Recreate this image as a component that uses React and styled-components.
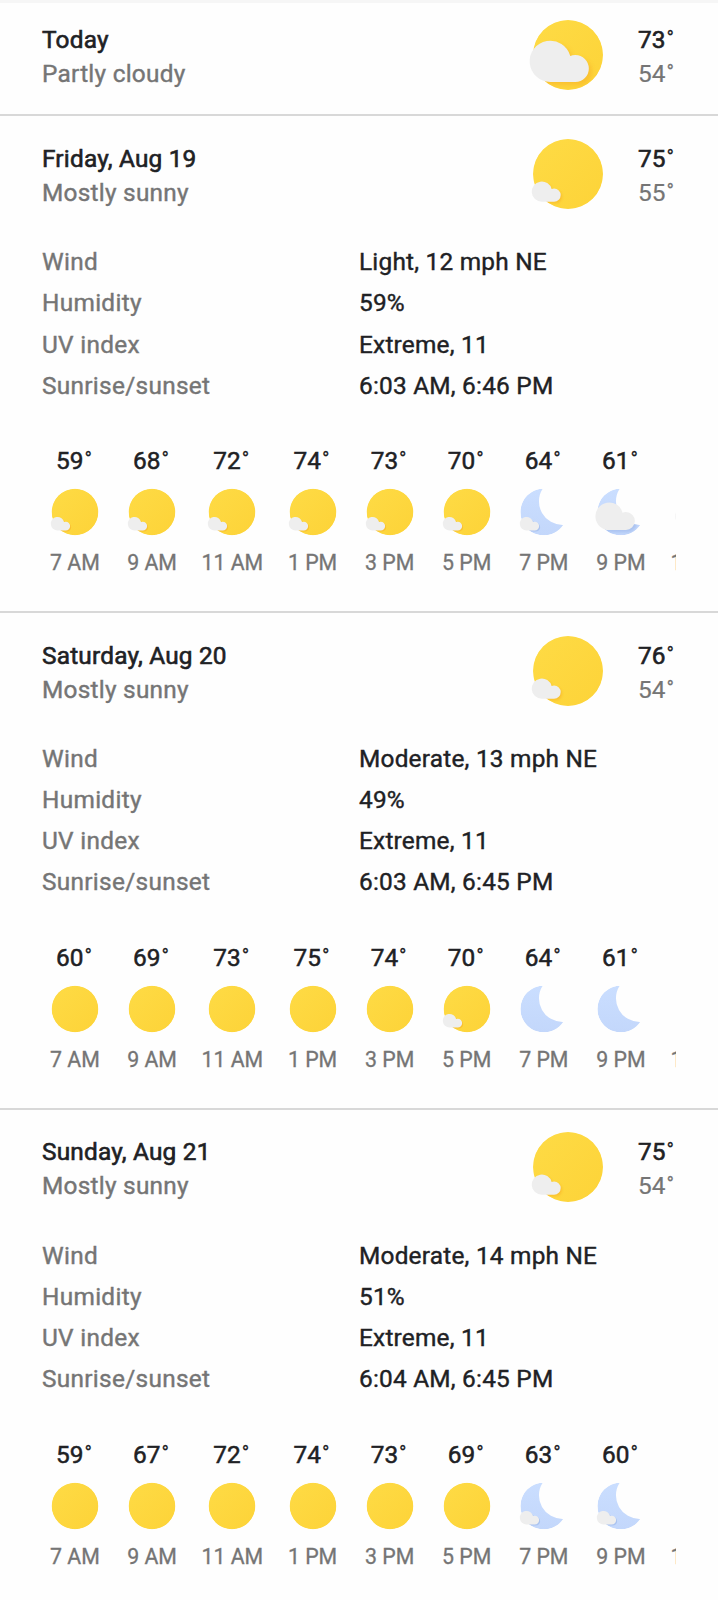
import React from "react";
import styled, { createGlobalStyle } from "styled-components";

const GlobalStyle = createGlobalStyle`
  * { box-sizing: border-box; }
  body { margin: 0; background: #fefefe; overflow: hidden; }
`;

const Page = styled.main`
  width: 718px;
  height: 1600px;
  overflow: hidden;
  background: #fefefe;
  border-top: 3px solid #f6f6f6;
  font-family: Roboto, "Liberation Sans", sans-serif;
  font-weight: 400;
  font-size: 24.4px;
  line-height: 34px;
  color: #202124;
  -webkit-text-stroke: 0.4px;
`;

const Day = styled.section`
  height: ${(p) => (p.$open ? 496.8 : 113.2)}px;
  border-bottom: 2px solid #d8d8d8;
  padding: ${(p) => (p.$open ? 25.6 : 19.6)}px 42px 0;
`;

const Header = styled.header`
  display: flex;
  height: 68px;
`;

const Title = styled.div`
  flex: 1;
`;

const DayName = styled.div`
  letter-spacing: 0.2px;
  -webkit-text-stroke-width: 0.6px;
`;

const Muted = styled.div`
  color: #757575;
  letter-spacing: 0.25px;
`;

const HeaderIcon = styled.div`
  width: 84px;
  height: 72px;
  margin: -4px 28px 0 0;
`;

const HighLow = styled.div`
  width: 38px;
  white-space: nowrap;
`;

const High = styled.div`
  -webkit-text-stroke-width: 0.6px;
`;

const Low = styled.div`
  color: #757575;
  -webkit-text-stroke-width: 0.2px;
`;

const Degree = styled.span`
  display: inline-block;
  line-height: 1;
  font-size: 20px;
  margin-left: 1px;
  transform: translateY(-3.2px);
  -webkit-text-stroke-width: 0.2px;
`;

const Details = styled.dl`
  display: grid;
  grid-template-columns: 317px 1fr;
  grid-auto-rows: 41.1px;
  align-items: center;
  margin: 32px 0 0;
`;

const Label = styled.dt`
  color: #757575;
  letter-spacing: 0.3px;
`;

const Value = styled.dd`
  margin: 0;
  letter-spacing: 0.22px;
`;

const Hours = styled.div`
  display: flex;
  overflow: hidden;
  width: 640px;
  margin: 37.8px 0 0 -5.6px;
`;

const Hour = styled.div`
  flex: none;
  width: ${(p) => (p.$wide ? 83.4 : 77.1)}px;
  display: flex;
  flex-direction: column;
  align-items: center;
`;

const HourTemp = styled.div`
  height: 34px;
  padding-right: 2px;
  -webkit-text-stroke-width: 0.5px;
`;

const HourIcon = styled.div`
  width: 56px;
  height: 48px;
  margin: 10px 0 10px;
`;

const HourTime = styled.div`
  font-size: 21.3px;
  color: #757575;
  white-space: nowrap;
  -webkit-text-stroke-width: 0.3px;
`;

const Svg = styled.svg`
  display: block;
  width: 100%;
  height: 100%;
`;

const CLOUD =
  "M-53 81A62 62 0 1 1 6.9 3.1Q13 0 22 0A40.5 40.5 0 0 1 22 81Z";

function WeatherIcon({ kind }) {
  const night = kind.startsWith("moon");
  const cloud = kind.endsWith("partly")
    ? undefined
    : "translate(-52.5 43.5) scale(.49)";
  const hasCloud = kind.endsWith("partly") || kind.endsWith("mostly");
  return (
    <Svg viewBox="-126 -108 252 216">
      <defs>
        <linearGradient id="sunFill" x1="0" y1="0" x2="1" y2="1">
          <stop offset="0" stopColor="#fedb45" />
          <stop offset="1" stopColor="#fdd338" />
        </linearGradient>
        <linearGradient id="moonFill" x1="0" y1="0" x2="0" y2="1">
          <stop offset="0" stopColor="#cadeff" />
          <stop offset="1" stopColor="#c3d7fb" />
        </linearGradient>
        <filter id="soft" x="-30%" y="-30%" width="160%" height="160%">
          <feGaussianBlur stdDeviation="7" />
        </filter>
        <clipPath id="sunClip">
          <circle r="105" />
        </clipPath>
        <clipPath id="moonClip">
          <path d="M-6 -105A105 105 0 1 0 86 58A106 106 0 0 1 -6 -105Z" />
        </clipPath>
      </defs>
      <g clipPath={night ? "url(#moonClip)" : "url(#sunClip)"}>
        <circle r="106" fill={night ? "url(#moonFill)" : "url(#sunFill)"} />
        {hasCloud && (
          <g transform={cloud}>
            <path
              d={CLOUD}
              transform="translate(9 10)"
              fill={night ? "#9db8ea" : "#f8b62b"}
              opacity=".65"
              filter="url(#soft)"
            />
          </g>
        )}
      </g>
      {hasCloud && <path d={CLOUD} transform={cloud} fill="#eeeeee" />}
    </Svg>
  );
}

const TIMES = ["7 AM", "9 AM", "11 AM", "1 PM", "3 PM", "5 PM", "7 PM", "9 PM", "11 PM"];

const DAYS = [
  {
    name: "Friday, Aug 19", high: 75, low: 55,
    details: ["Light, 12 mph NE", "59%", "Extreme, 11", "6:03 AM, 6:46 PM"],
    temps: [59, 68, 72, 74, 73, 70, 64, 61],
    icons: ["sun-mostly", "sun-mostly", "sun-mostly", "sun-mostly", "sun-mostly", "sun-mostly", "moon-mostly", "moon-partly", "moon-partly"],
  },
  {
    name: "Saturday, Aug 20", high: 76, low: 54,
    details: ["Moderate, 13 mph NE", "49%", "Extreme, 11", "6:03 AM, 6:45 PM"],
    temps: [60, 69, 73, 75, 74, 70, 64, 61],
    icons: ["sun", "sun", "sun", "sun", "sun", "sun-mostly", "moon", "moon", "moon"],
  },
  {
    name: "Sunday, Aug 21", high: 75, low: 54,
    details: ["Moderate, 14 mph NE", "51%", "Extreme, 11", "6:04 AM, 6:45 PM"],
    temps: [59, 67, 72, 74, 73, 69, 63, 60],
    icons: ["sun", "sun", "sun", "sun", "sun", "sun", "moon-mostly", "moon-mostly", "moon"],
  },
];

const LABELS = ["Wind", "Humidity", "UV index", "Sunrise/sunset"];

function Temp({ value }) {
  return (
    <>
      {value}
      <Degree>°</Degree>
    </>
  );
}

function DayHeader({ name, summary, icon, high, low }) {
  return (
    <Header>
      <Title>
        <DayName>{name}</DayName>
        <Muted>{summary}</Muted>
      </Title>
      <HeaderIcon>
        <WeatherIcon kind={icon} />
      </HeaderIcon>
      <HighLow>
        <High>
          <Temp value={high} />
        </High>
        <Low>
          <Temp value={low} />
        </Low>
      </HighLow>
    </Header>
  );
}

export default function App() {
  return (
    <Page>
      <GlobalStyle />
      <Day>
        <DayHeader name="Today" summary="Partly cloudy" icon="sun-partly" high={73} low={54} />
      </Day>
      {DAYS.map((d) => (
        <Day key={d.name} $open>
          <DayHeader name={d.name} summary="Mostly sunny" icon="sun-mostly" high={d.high} low={d.low} />
          <Details>
            {LABELS.map((label, i) => (
              <React.Fragment key={label}>
                <Label>{label}</Label>
                <Value>{d.details[i]}</Value>
              </React.Fragment>
            ))}
          </Details>
          <Hours>
            {TIMES.map((time, i) => (
              <Hour key={time} $wide={time.startsWith("11")}>
                <HourTemp>{d.temps[i] && <Temp value={d.temps[i]} />}</HourTemp>
                <HourIcon>
                  <WeatherIcon kind={d.icons[i]} />
                </HourIcon>
                <HourTime>{time}</HourTime>
              </Hour>
            ))}
          </Hours>
        </Day>
      ))}
    </Page>
  );
}
